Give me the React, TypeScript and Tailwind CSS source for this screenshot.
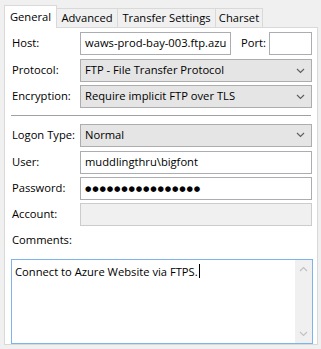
import React from "react";

const Chevron = ({ up = false, color = "#606060" }: { up?: boolean; color?: string }) => (
  <svg width="9" height="6" viewBox="0 0 9 6" className="shrink-0">
    <polyline
      points={up ? "1,5 4.5,1.5 8,5" : "1,1 4.5,4.5 8,1"}
      fill="none"
      stroke={color}
      strokeWidth="1.2"
    />
  </svg>
);

function Select({ value, className = "" }: { value: string; className?: string }) {
  return (
    <div
      className={`flex h-[23px] items-center justify-between border border-[#adadad] bg-[#e5e5e5] pl-[4px] pr-[6px] ${className}`}
    >
      <span className="whitespace-nowrap">{value}</span>
      <Chevron />
    </div>
  );
}

function TextBox({ value, className = "", children }: { value?: string; className?: string; children?: React.ReactNode }) {
  return (
    <div
      className={`flex h-[23px] items-center overflow-hidden whitespace-nowrap border border-[#abadb3] bg-white pl-[4px] ${className}`}
    >
      {value}
      {children}
    </div>
  );
}

function Row({ label, children, className = "" }: { label: string; children: React.ReactNode; className?: string }) {
  return (
    <div className={`flex items-center ${className}`}>
      <span className="w-[75px] shrink-0 whitespace-nowrap pl-[7px]">{label}</span>
      {children}
    </div>
  );
}

export default function App() {
  return (
    <div className="h-[349px] w-[321px] overflow-hidden bg-[#f0f0f0] pl-[4px] pt-[5px] font-['Open_Sans'] text-[11.2px] text-black">
      {/* tabs */}
      <div className="flex h-[22px] items-end">
        <div className="relative z-10 -mb-px flex h-[23px] w-[53px] items-center justify-center border border-b-0 border-[#d9d9d9] bg-white">
          General
        </div>
        <div className="flex h-[19px] w-[61px] items-center justify-center border border-b-0 border-l-0 border-[#d9d9d9] bg-[#f0f0f0]">
          Advanced
        </div>
        <div className="flex h-[19px] w-[98px] items-center justify-center border border-b-0 border-l-0 border-[#d9d9d9] bg-[#f0f0f0]">
          Transfer Settings
        </div>
        <div className="flex h-[19px] w-[47px] items-center justify-center border border-b-0 border-l-0 border-[#d9d9d9] bg-[#f0f0f0]">
          Charset
        </div>
      </div>

      {/* panel */}
      <div className="flex h-[318px] w-[314px] flex-col border border-[#d9d9d9] bg-white pt-[4px]">
        <Row label="Host:">
          <TextBox value="waws-prod-bay-003.ftp.azu" className="w-[151px]" />
          <span className="ml-[10px] w-[28px] whitespace-nowrap">Port:</span>
          <TextBox className="w-[43px]" />
        </Row>
        <Row label="Protocol:" className="mt-[4px]">
          <Select value="FTP - File Transfer Protocol" className="w-[232px]" />
        </Row>
        <Row label="Encryption:" className="mt-[3px]">
          <Select value="Require implicit FTP over TLS" className="w-[232px]" />
        </Row>

        <div className="mx-[6px] mt-[7px] h-px bg-[#a0a0a0]" />

        <Row label="Logon Type:" className="mt-[8px]">
          <Select value="Normal" className="w-[232px]" />
        </Row>
        <Row label="User:" className="mt-[4px]">
          <TextBox value="muddlingthru\bigfont" className="w-[232px]" />
        </Row>
        <Row label="Password:" className="mt-[3px]">
          <TextBox className="w-[232px]">
            <span className="font-['DejaVu_Sans'] text-[7.4px] tracking-[0.8px]">●●●●●●●●●●●●●●●●</span>
          </TextBox>
        </Row>
        <Row label="Account:" className="mt-[3px]">
          <div className="h-[23px] w-[232px] border border-[#cccccc] bg-[#f0f0f0]" />
        </Row>

        <div className="mt-[3px] pl-[7px] leading-[22px]">Comments:</div>
        <div className="ml-[6px] mt-[8px] flex h-[87px] w-[302px] border border-[#7eb4ea] bg-white">
          <div className="flex-1 pl-[3px] pt-[2px] leading-[17px]">
            Connect to Azure Website via FTPS.
            <span className="ml-px inline-block h-[14px] w-px translate-y-[2px] bg-black" />
          </div>
          <div className="flex w-[17px] flex-col items-center justify-between bg-[#f0f0f0] py-[6px]">
            <Chevron up color="#c2c2c2" />
            <Chevron color="#c2c2c2" />
          </div>
        </div>
      </div>
    </div>
  );
}
